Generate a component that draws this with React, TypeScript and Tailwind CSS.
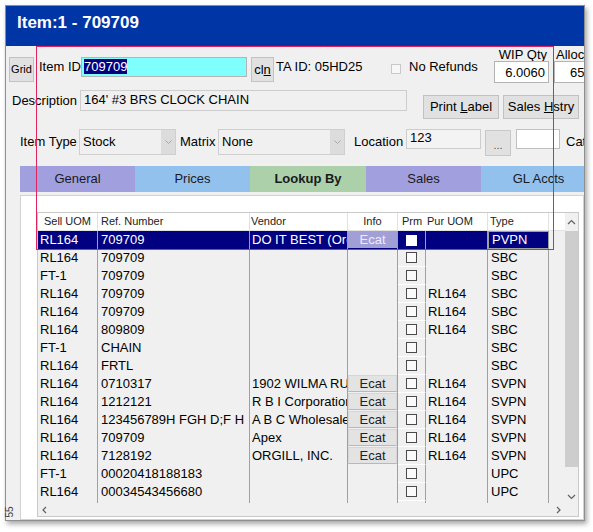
import React from "react"

type Row = {
  uom: string
  ref: string
  vendor: string
  ecat: boolean
  pur: string
  type: string
}

const rows: Row[] = [
  { uom: "RL164", ref: "709709", vendor: "DO IT BEST (Order)", ecat: true, pur: "", type: "PVPN" },
  { uom: "RL164", ref: "709709", vendor: "", ecat: false, pur: "", type: "SBC" },
  { uom: "FT-1", ref: "709709", vendor: "", ecat: false, pur: "", type: "SBC" },
  { uom: "RL164", ref: "709709", vendor: "", ecat: false, pur: "RL164", type: "SBC" },
  { uom: "RL164", ref: "709709", vendor: "", ecat: false, pur: "RL164", type: "SBC" },
  { uom: "RL164", ref: "809809", vendor: "", ecat: false, pur: "RL164", type: "SBC" },
  { uom: "FT-1", ref: "CHAIN", vendor: "", ecat: false, pur: "", type: "SBC" },
  { uom: "RL164", ref: "FRTL", vendor: "", ecat: false, pur: "", type: "SBC" },
  { uom: "RL164", ref: "0710317", vendor: "1902 WILMA RUDOLPH", ecat: true, pur: "RL164", type: "SVPN" },
  { uom: "RL164", ref: "1212121", vendor: "R B I Corporation", ecat: true, pur: "RL164", type: "SVPN" },
  { uom: "RL164", ref: "123456789H FGH D;F H", vendor: "A B C Wholesale", ecat: true, pur: "RL164", type: "SVPN" },
  { uom: "RL164", ref: "709709", vendor: "Apex", ecat: true, pur: "RL164", type: "SVPN" },
  { uom: "RL164", ref: "7128192", vendor: "ORGILL, INC.", ecat: true, pur: "RL164", type: "SVPN" },
  { uom: "FT-1", ref: "00020418188183", vendor: "", ecat: false, pur: "", type: "UPC" },
  { uom: "RL164", ref: "00034543456680", vendor: "", ecat: false, pur: "", type: "UPC" },
  { uom: "", ref: "", vendor: "", ecat: false, pur: "", type: "" },
]

function Chevron({ up = false }: { up?: boolean }) {
  return (
    <svg width="9" height="6" viewBox="0 0 9 6" fill="none" stroke="#606060" strokeWidth="1.2">
      {up ? <path d="M1 5l3.5-3.5L8 5" /> : <path d="M1 1l3.5 3.5L8 1" />}
    </svg>
  )
}

function Select({ value, width }: { value: string; width: string }) {
  return (
    <div className={`mt-[10px] flex h-[26px] ${width} border border-[#cfcfcf] bg-[#f0f0f0]`}>
      <div className="flex-1 pl-[3px] leading-[24px]">{value}</div>
      <div className="flex w-[14px] items-center justify-center bg-[#dcdcdc]">
        <svg width="7" height="4" viewBox="0 0 7 4" fill="none" stroke="#a8a8a8" strokeWidth="1">
          <path d="M0.5 0.5l3 3 3-3" />
        </svg>
      </div>
    </div>
  )
}

function GridRow({ r, selected }: { r: Row; selected: boolean }) {
  const bg = selected ? "bg-[#000080] text-white" : "bg-[#f0f0f0] text-black"
  return (
    <div className={`flex h-[18px] w-[511px] leading-[18px] *:shrink-0 ${bg}`}>
      <div className="w-[60px] overflow-hidden whitespace-nowrap border-r border-[#a0a0a0] pl-[2px]">{r.uom}</div>
      <div className="w-[152px] overflow-hidden whitespace-nowrap border-r border-[#a0a0a0] pl-[3px]">{r.ref}</div>
      <div className="w-[98px] overflow-hidden whitespace-nowrap border-r border-[#a0a0a0] pl-[2px]">{r.vendor}</div>
      <div className="w-[50px] border-r border-[#a0a0a0]">
        {r.ecat && (
          <div
            className={
              selected
                ? "h-[17px] bg-[#a29fd6] text-center leading-[17px] text-[#ececff]"
                : "h-[17px] border border-[#d6d6d6] border-b-[#b8b8b8] bg-[#e3e3e3] text-center leading-[15px] text-[#222]"
            }
          >
            Ecat
          </div>
        )}
      </div>
      <div className={`flex w-[28px] items-center justify-center border-r border-[#a0a0a0] ${selected ? "" : "border-b border-b-white"}`}>
        {r.uom && (
          <div className={selected ? "h-[11px] w-[11px] bg-white" : "h-[11px] w-[11px] border border-[#4a4a4a] bg-[#fafafa]"} />
        )}
      </div>
      <div className="w-[62px] overflow-hidden whitespace-nowrap border-r border-[#a0a0a0] pl-[2px]">{r.pur}</div>
      <div className={`w-[61px] overflow-hidden whitespace-nowrap border-r border-[#a0a0a0] pl-[3px] ${selected ? "border border-[#8888c4] leading-[16px]" : ""}`}>
        {r.type}
      </div>
    </div>
  )
}

export default function App() {
  return (
    <div className="relative h-[532px] w-[593px] overflow-hidden bg-white font-['Liberation_Sans',Arial,sans-serif] text-[13px] text-black">
      <div className="ml-[5px] mt-[5px] flex h-[516px] w-[580px] flex-col overflow-hidden border border-[#8f8f8f] bg-[#f0f0f0] shadow-[2px_3px_5px_rgba(0,0,0,0.35)]">
        {/* title bar */}
        <div className="h-[40px] shrink-0 bg-[#0035a6] pl-[11px] pt-[8px] text-[17px] font-bold leading-[18px] text-white">
          Item:1 - 709709
        </div>

        {/* row 1 */}
        <div className="flex h-[39px] shrink-0 items-start whitespace-nowrap *:shrink-0">
          <button className="ml-[3px] mt-[11px] h-[25px] w-[25px] border border-[#c2c2c2] bg-[#e1e1e1] text-[11px]">
            Grid
          </button>
          <div className="mt-[11px] h-[20px] w-[47px] pl-[5px] leading-[20px]">Item ID</div>
          <div className="mt-[11px] h-[20px] w-[166px] border border-[#b4b4b4] bg-[#80ffff] pl-[2px] leading-[18px]">
            <span className="bg-[#000080] text-white">709709</span>
          </div>
          <button className="ml-[4px] mt-[11px] h-[25px] w-[23px] border border-[#c2c2c2] bg-[#e1e1e1]">
            cl<span className="underline">n</span>
          </button>
          <div className="mt-[11px] w-[115px] pl-[2px] leading-[20px]">TA ID: 05HD25</div>
          <div className="ml-[2px] mt-[18px] h-[10px] w-[10px] border border-[#c8c8c8] bg-[#f7f7f7]" />
          <div className="ml-[8px] mt-[11px] w-[85px] leading-[20px]">No Refunds</div>
          <div className="flex w-[55px] flex-col">
            <div className="mt-[3px] h-[12px] pr-[2px] text-right leading-[12px]">WIP Qty</div>
            <div className="h-[22px] border border-[#b4b4b4] bg-white pr-[3px] text-right leading-[21px]">6.0060</div>
          </div>
          <div className="ml-[5px] flex w-[70px] flex-col">
            <div className="mt-[3px] h-[12px] pl-[2px] leading-[12px]">Allocated</div>
            <div className="h-[22px] border border-[#b4b4b4] bg-white pl-[15px] leading-[21px]">65.0000</div>
          </div>
        </div>

        {/* row 2 */}
        <div className="flex h-[34px] shrink-0 items-start whitespace-nowrap *:shrink-0">
          <div className="ml-[6px] mt-[5px] h-[21px] w-[68px] leading-[21px]">Description</div>
          <div className="mt-[5px] h-[21px] w-[327px] border border-[#cdcdcd] bg-[#f0f0f0] pl-[3px] leading-[18px]">
            164' #3 BRS CLOCK CHAIN
          </div>
          <button className="ml-[16px] mt-[10px] h-[24px] w-[76px] border border-[#c2c2c2] bg-[#e1e1e1]">
            Print <span className="underline">L</span>abel
          </button>
          <button className="ml-[4px] mt-[10px] h-[24px] w-[76px] border border-[#c2c2c2] bg-[#e1e1e1]">
            Sales <span className="underline">H</span>stry
          </button>
        </div>

        {/* row 3 */}
        <div className="flex h-[37px] shrink-0 items-start whitespace-nowrap *:shrink-0">
          <div className="ml-[14px] mt-[10px] w-[59px] leading-[26px]">Item Type</div>
          <Select value="Stock" width="w-[97px]" />
          <div className="mt-[10px] w-[42px] pl-[4px] leading-[26px]">Matrix</div>
          <Select value="None" width="w-[127px]" />
          <div className="mt-[10px] w-[61px] pl-[9px] leading-[26px]">Location</div>
          <div className="mt-[10px] h-[20px] w-[75px] border border-[#cdcdcd] bg-[#f3f3f3] pl-[3px] leading-[16px]">123</div>
          <button className="ml-[4px] mt-[11px] h-[26px] w-[26px] border border-[#c8c8c8] bg-[#e1e1e1] pt-[4px] text-[11px] leading-[12px] text-[#555]">
            ...
          </button>
          <div className="ml-[5px] mt-[10px] h-[20px] w-[44px] border border-[#c0c0c0] bg-white" />
          <div className="ml-[6px] mt-[10px] leading-[26px]">Category</div>
        </div>

        {/* tabs */}
        <div className="ml-[14px] mt-[10px] flex h-[26px] shrink-0 whitespace-nowrap text-[#1a1a1a] *:shrink-0">
          <div className="w-[115px] bg-[#a29fdf] text-center leading-[26px]">General</div>
          <div className="w-[115px] bg-[#93c1ee] text-center leading-[26px]">Prices</div>
          <div className="w-[116px] bg-[#abd0aa] text-center font-bold leading-[26px]">Lookup By</div>
          <div className="w-[115px] bg-[#a29fdf] text-center leading-[26px]">Sales</div>
          <div className="w-[115px] bg-[#93c1ee] text-center leading-[26px]">GL Accts</div>
        </div>

        {/* tab panel */}
        <div className="ml-[14px] mt-[3px] w-[564px] flex-1 border border-[#d2d2d2] bg-white">
          <div className="ml-[16px] mt-[16px] h-[305px] w-[542px] border border-[#c9c9c9] bg-[#f0f0f0]">
            <div className="flex h-[303px]">
              <div className="flex w-[527px] flex-col">
                {/* header */}
                <div className="flex h-[18px] shrink-0 border-b border-[#e2e2e2] bg-white text-[11px] leading-[17px] text-[#222]">
                  <div className="w-[60px] border-r border-[#e2e2e2] text-center">Sell UOM</div>
                  <div className="w-[152px] border-r border-[#e2e2e2] pl-[3px]">Ref. Number</div>
                  <div className="w-[98px] border-r border-[#e2e2e2] pl-[1px]">Vendor</div>
                  <div className="w-[50px] border-r border-[#e2e2e2] text-center">Info</div>
                  <div className="w-[28px] text-center">Prm</div>
                  <div className="w-[62px] border-r border-[#e2e2e2] pl-[1px]">Pur UOM</div>
                  <div className="w-[61px] border-r border-[#e2e2e2] pl-[2px]">Type</div>
                  <div className="flex-1" />
                </div>
                {/* body */}
                <div className="h-[272px] shrink-0 overflow-hidden">
                  {rows.map((r, i) => (
                    <GridRow key={i} r={r} selected={i === 0} />
                  ))}
                </div>
                {/* horizontal scrollbar */}
                <div className="flex h-[13px] shrink-0 items-center justify-between bg-[#f0f0f0] px-[4px]">
                  <svg width="5" height="8" viewBox="0 0 5 8" fill="none" stroke="#606060" strokeWidth="1.2">
                    <path d="M4 1L1 4l3 3" />
                  </svg>
                  <svg width="5" height="8" viewBox="0 0 5 8" fill="none" stroke="#606060" strokeWidth="1.2">
                    <path d="M1 1l3 3-3 3" />
                  </svg>
                </div>
              </div>
              {/* vertical scrollbar */}
              <div className="flex w-[13px] flex-col">
                <div className="flex h-[18px] items-center justify-center bg-[#f0f0f0]">
                  <Chevron up />
                </div>
                <div className="h-[236px] bg-[#cdcdcd]" />
                <div className="flex-1 bg-[#f0f0f0]" />
                <div className="flex h-[13px] items-center justify-center bg-[#f0f0f0]">
                  <Chevron />
                </div>
                <div className="h-[13px] bg-[#f0f0f0]" />
              </div>
            </div>
          </div>
        </div>
      </div>

      {/* side caption */}
      <div className="absolute left-[4px] top-[507px] -rotate-90 text-[10px] leading-[10px] text-[#444]">55</div>

      {/* annotation rectangle */}
      <div className="pointer-events-none absolute left-[36px] top-[46px] h-[204px] w-[518px] border-[1.5px] border-[#e0245e]" />
    </div>
  )
}
